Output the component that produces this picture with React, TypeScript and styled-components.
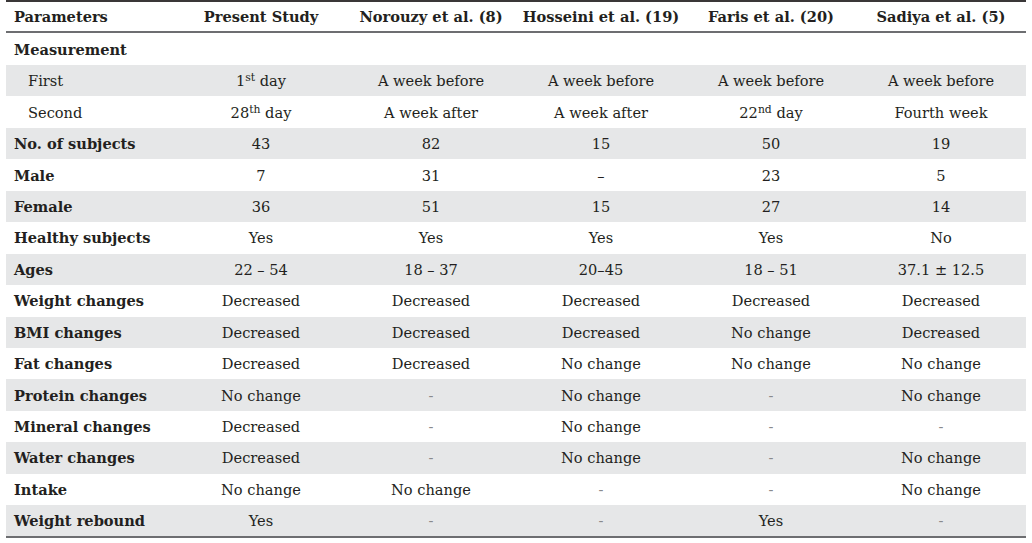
import React, { FC, ReactNode } from "react";
import styled, { createGlobalStyle } from "styled-components";

const GlobalStyle = createGlobalStyle`
  html, body {
    margin: 0;
    padding: 0;
    background: #ffffff;
  }
  body {
    font-family: "DejaVu Serif", "Liberation Serif", serif;
    color: #231f20;
  }
`;

const Wrapper = styled.div`
  padding: 0 6px;
`;

const Table = styled.table`
  width: 1020px;
  table-layout: fixed;
  border-collapse: collapse;
  font-size: 14.6px;
  border-top: 2px solid #3a3738;
  border-bottom: 2px solid #6d6e71;
`;

const HeadRow = styled.tr`
  height: 31px;
  border-bottom: 2px solid #6d6e71;
`;

const HeadCell = styled.th<{ $first?: boolean }>`
  font-weight: bold;
  text-align: ${(p) => (p.$first ? "left" : "center")};
  padding: 0 0 0 ${(p) => (p.$first ? "8px" : "0")};
  vertical-align: middle;
  white-space: nowrap;
`;

const Row = styled.tr<{ $shaded?: boolean; $tall?: boolean }>`
  height: ${(p) => (p.$tall ? "33px" : "31.45px")};
  background: ${(p) => (p.$shaded ? "#e6e7e8" : "transparent")};
`;

const LabelCell = styled.td<{ $sub?: boolean }>`
  font-weight: ${(p) => (p.$sub ? "normal" : "bold")};
  padding: 0 0 0 ${(p) => (p.$sub ? "22px" : "8px")};
  text-align: left;
  vertical-align: middle;
  white-space: nowrap;
`;

const ValueCell = styled.td`
  text-align: center;
  vertical-align: middle;
  padding: 0;
  white-space: nowrap;
`;

const Muted = styled.span`
  color: #8a8a8c;
`;

const Sup = styled.sup`
  font-size: 0.74em;
  line-height: 0;
  vertical-align: 0.5em;
`;

type RowData = {
  label: string;
  values: ReactNode[];
  sub?: boolean;
};

const dash = <Muted>-</Muted>;

const headers = [
  "Parameters",
  "Present Study",
  "Norouzy et al. (8)",
  "Hosseini et al. (19)",
  "Faris et al. (20)",
  "Sadiya et al. (5)",
];

const rows: RowData[] = [
  {
    label: "First",
    sub: true,
    values: [
      <>1<Sup>st</Sup> day</>,
      "A week before",
      "A week before",
      "A week before",
      "A week before",
    ],
  },
  {
    label: "Second",
    sub: true,
    values: [
      <>28<Sup>th</Sup> day</>,
      "A week after",
      "A week after",
      <>22<Sup>nd</Sup> day</>,
      "Fourth week",
    ],
  },
  { label: "No. of subjects", values: ["43", "82", "15", "50", "19"] },
  { label: "Male", values: ["7", "31", "–", "23", "5"] },
  { label: "Female", values: ["36", "51", "15", "27", "14"] },
  { label: "Healthy subjects", values: ["Yes", "Yes", "Yes", "Yes", "No"] },
  { label: "Ages", values: ["22 – 54", "18 – 37", "20–45", "18 – 51", "37.1 ± 12.5"] },
  { label: "Weight changes", values: ["Decreased", "Decreased", "Decreased", "Decreased", "Decreased"] },
  { label: "BMI changes", values: ["Decreased", "Decreased", "Decreased", "No change", "Decreased"] },
  { label: "Fat changes", values: ["Decreased", "Decreased", "No change", "No change", "No change"] },
  { label: "Protein changes", values: ["No change", dash, "No change", dash, "No change"] },
  { label: "Mineral changes", values: ["Decreased", dash, "No change", dash, dash] },
  { label: "Water changes", values: ["Decreased", dash, "No change", dash, "No change"] },
  { label: "Intake", values: ["No change", "No change", dash, dash, "No change"] },
  { label: "Weight rebound", values: ["Yes", dash, dash, "Yes", dash] },
];

const App: FC = () => (
  <>
    <GlobalStyle />
    <Wrapper>
      <Table>
        <thead>
          <HeadRow>
            {headers.map((h, i) => (
              <HeadCell key={h} $first={i === 0}>
                {h}
              </HeadCell>
            ))}
          </HeadRow>
        </thead>
        <tbody>
          <Row $tall>
            <LabelCell>Measurement</LabelCell>
            <ValueCell />
            <ValueCell />
            <ValueCell />
            <ValueCell />
            <ValueCell />
          </Row>
          {rows.map((r, i) => (
            <Row key={r.label} $shaded={i % 2 === 0}>
              <LabelCell $sub={r.sub}>{r.label}</LabelCell>
              {r.values.map((v, j) => (
                <ValueCell key={j}>{v}</ValueCell>
              ))}
            </Row>
          ))}
        </tbody>
      </Table>
    </Wrapper>
  </>
);

export default App;
